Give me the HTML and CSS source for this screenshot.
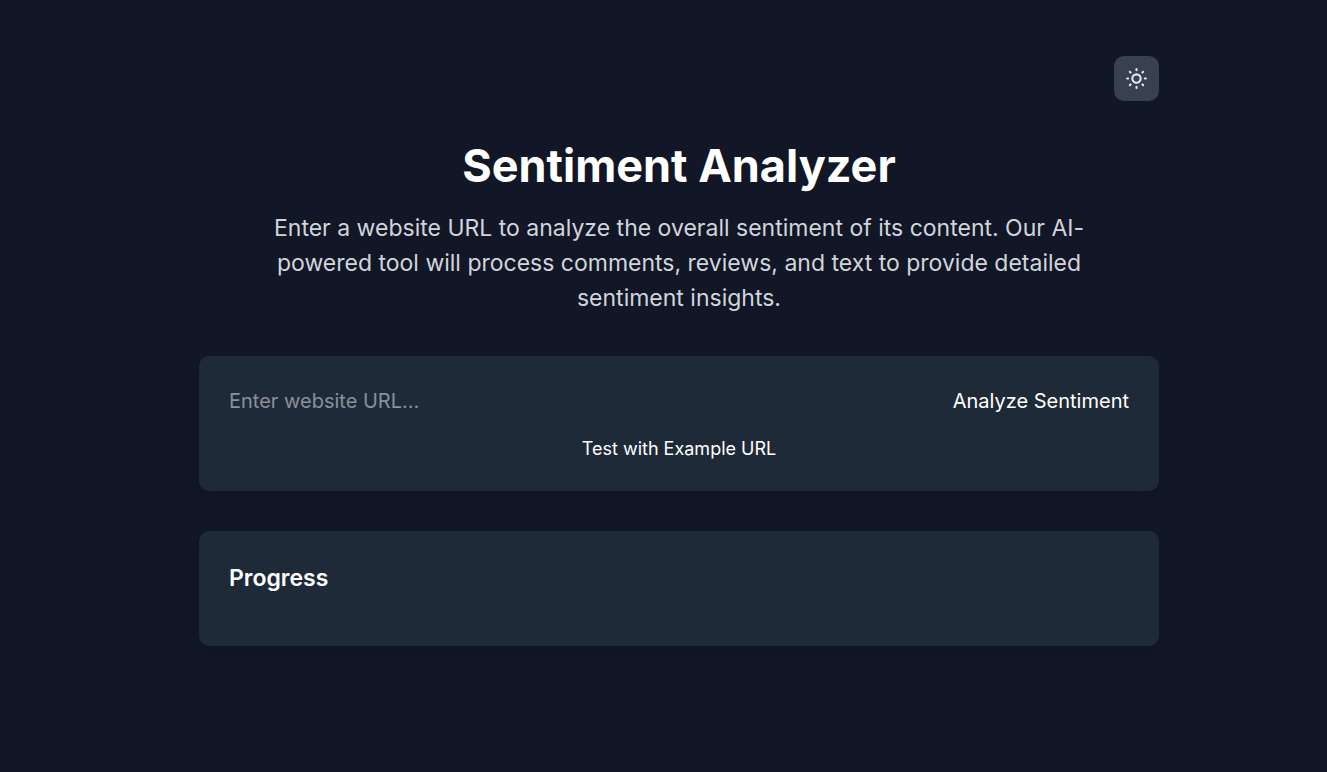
FILE: index.html
```html
<!DOCTYPE html>
<html lang="en">
<head>
<meta charset="utf-8">
<meta name="viewport" content="width=device-width, initial-scale=1">
<title>Sentiment Analyzer</title>
<link rel="stylesheet" href="styles.css">
</head>
<body>
<main class="container">
  <div class="toolbar">
    <button class="theme-toggle" type="button" aria-label="Toggle theme">
      <svg class="icon" viewBox="0 0 24 24" fill="none" stroke="currentColor" stroke-width="2" stroke-linecap="round" stroke-linejoin="round" aria-hidden="true">
        <circle cx="12" cy="12" r="4"/>
        <path d="M12 3v1M12 20v1M3 12h1M20 12h1M5.6 5.6l.7.7M17.7 17.7l.7.7M5.6 18.4l.7-.7M17.7 6.3l.7-.7"/>
      </svg>
    </button>
  </div>
  <header class="intro">
    <h1 class="title">Sentiment Analyzer</h1>
    <p class="lead">Enter a website URL to analyze the overall sentiment of its content. Our AI-powered tool will process comments, reviews, and text to provide detailed sentiment insights.</p>
  </header>
  <section class="card">
    <form class="url-form">
      <input class="url-input" type="url" placeholder="Enter website URL..." aria-label="Website URL">
      <button class="analyze" type="button">Analyze Sentiment</button>
    </form>
    <div class="example-row">
      <button class="example" type="button">Test with Example URL</button>
    </div>
  </section>
  <section class="card">
    <h2 class="card-title">Progress</h2>
  </section>
</main>
</body>
</html>
```
FILE: styles.css
```css
* {
  box-sizing: border-box;
  margin: 0;
}

body {
  min-height: 100vh;
  padding: 56px 0 40px 31px;
  background: #111726;
  color: #fff;
  font-family: Inter, "Liberation Sans", sans-serif;
  font-size: 20px;
  line-height: 30px;
}

button,
input {
  padding: 0;
  border: 0;
  background: transparent;
  color: inherit;
  font: inherit;
}

button {
  cursor: pointer;
}

.container {
  max-width: 960px;
  margin: 0 auto;
}

.toolbar {
  display: flex;
  justify-content: flex-end;
  margin-bottom: 40px;
}

.theme-toggle {
  display: flex;
  padding: 10px;
  border-radius: 10px;
  background: #374152;
  color: #e5e7eb;
}

.icon {
  width: 25px;
  height: 25px;
}

.intro {
  margin-bottom: 40px;
  text-align: center;
}

.title {
  margin-bottom: 20px;
  font-size: 45px;
  font-weight: 700;
  line-height: 50px;
}

.lead {
  max-width: 840px;
  margin: 0 auto;
  color: #d1d5db;
  font-size: 23px;
  line-height: 35px;
}

.card {
  padding: 30px;
  border-radius: 10px;
  background: #1f2a38;
  box-shadow: 0 10px 15px -3px rgb(0 0 0 / 6%), 0 4px 6px -2px rgb(0 0 0 / 3%);
}

.card + .card {
  margin-top: 40px;
}

.url-form {
  display: flex;
  gap: 20px;
  margin-bottom: 20px;
}

.url-input {
  flex: 1;
  min-width: 0;
}

.url-input::placeholder {
  color: #8b9099;
}

.example-row {
  display: flex;
  justify-content: center;
}

.example {
  font-size: 18px;
  line-height: 25px;
}

.card-title {
  margin-bottom: 20px;
  font-size: 23px;
  font-weight: 600;
  line-height: 35px;
}
```
